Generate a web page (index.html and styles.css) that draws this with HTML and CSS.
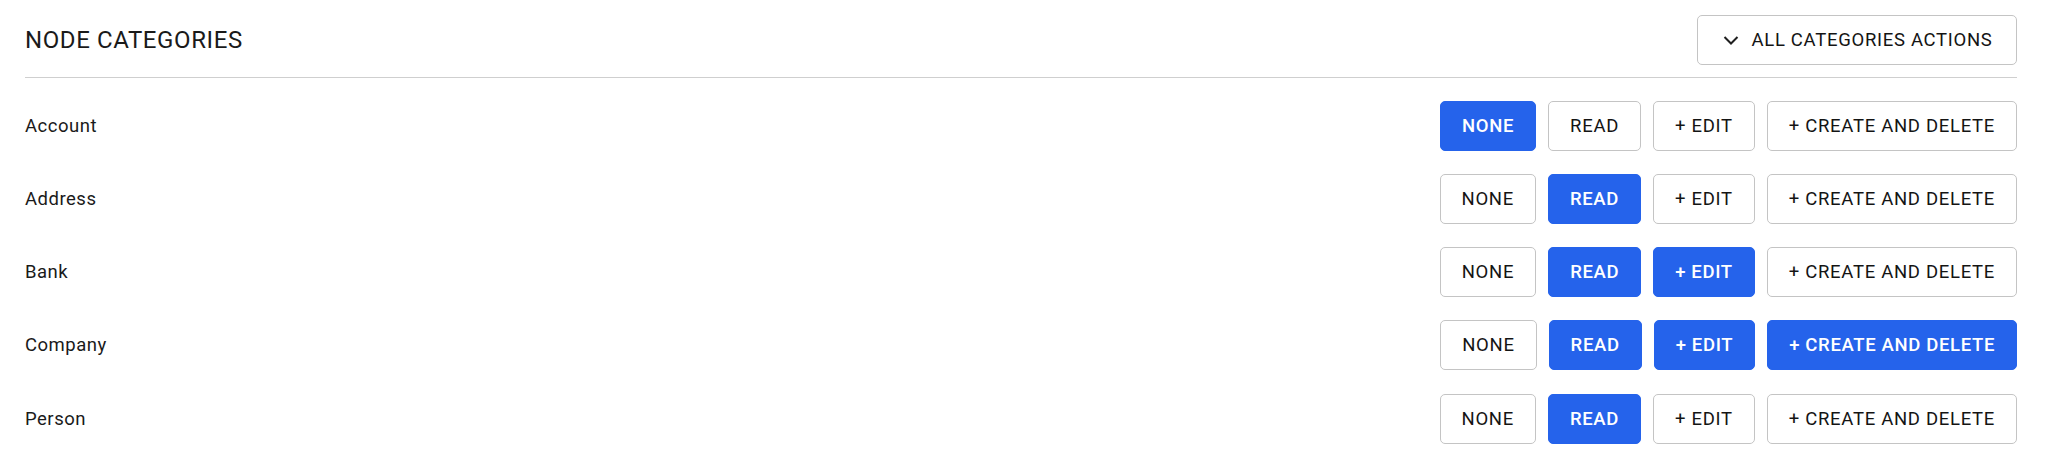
FILE: index.html
```html
<!DOCTYPE html>
<html lang="en">
<head>
<meta charset="utf-8">
<title>Node categories</title>
<link rel="stylesheet" href="styles.css">
</head>
<body>
<section class="panel">
  <header class="panel-header">
    <h2 class="panel-title">NODE CATEGORIES</h2>
    <button class="btn btn-actions" type="button">
      <svg class="chev" width="20" height="20" viewBox="0 0 20 20" aria-hidden="true"><polyline points="3.5,7 10,13.5 16.5,7" fill="none" stroke="#1f1f1f" stroke-width="2"/></svg>
      <span>ALL CATEGORIES ACTIONS</span>
    </button>
  </header>
  <ul class="rows">
    <li class="row">
      <span class="label">Account</span>
      <div class="actions">
        <button class="btn on" type="button">NONE</button>
        <button class="btn" type="button">READ</button>
        <button class="btn" type="button">+ EDIT</button>
        <button class="btn" type="button">+ CREATE AND DELETE</button>
      </div>
    </li>
    <li class="row">
      <span class="label">Address</span>
      <div class="actions">
        <button class="btn" type="button">NONE</button>
        <button class="btn on" type="button">READ</button>
        <button class="btn" type="button">+ EDIT</button>
        <button class="btn" type="button">+ CREATE AND DELETE</button>
      </div>
    </li>
    <li class="row">
      <span class="label">Bank</span>
      <div class="actions">
        <button class="btn" type="button">NONE</button>
        <button class="btn on" type="button">READ</button>
        <button class="btn on" type="button">+ EDIT</button>
        <button class="btn" type="button">+ CREATE AND DELETE</button>
      </div>
    </li>
    <li class="row">
      <span class="label">Company</span>
      <div class="actions">
        <button class="btn" type="button">NONE</button>
        <button class="btn on" type="button">READ</button>
        <button class="btn on" type="button">+ EDIT</button>
        <button class="btn on" type="button">+ CREATE AND DELETE</button>
      </div>
    </li>
    <li class="row">
      <span class="label">Person</span>
      <div class="actions">
        <button class="btn" type="button">NONE</button>
        <button class="btn on" type="button">READ</button>
        <button class="btn" type="button">+ EDIT</button>
        <button class="btn" type="button">+ CREATE AND DELETE</button>
      </div>
    </li>
  </ul>
</section>
</body>
</html>
```
FILE: styles.css
```css
* { box-sizing: border-box; }
html, body {
  margin: 0;
  background: #ffffff;
  font-family: Roboto, "Liberation Sans", Arial, sans-serif;
  color: #1a1a1a;
}
.panel {
  padding: 15px 31px 0 25px;
}
.panel-header {
  display: flex;
  align-items: center;
  justify-content: space-between;
  padding-bottom: 12px;
  border-bottom: 1px solid #cfcfcf;
}
.panel-title {
  margin: 0;
  font-size: 24px;
  font-weight: 400;
  color: #1a1a1a;
  letter-spacing: 0.6px;
}
.btn {
  display: inline-flex;
  align-items: center;
  justify-content: center;
  height: 50px;
  padding: 0 21px;
  border: 1px solid #c4c4c4;
  border-radius: 5px;
  background: #ffffff;
  color: #141414;
  font-family: Roboto, "Liberation Sans", Arial, sans-serif;
  font-size: 18.5px;
  font-weight: 400;
  letter-spacing: 0.7px;
  cursor: pointer;
}
.btn.on {
  background: #2563eb;
  border-color: #2563eb;
  color: #ffffff;
  font-weight: 500;
  letter-spacing: 0.65px;
}
.btn-actions {
  width: 320px;
  gap: 10px;
  padding: 0 22px;
}
.chev { display: block; }
.rows {
  list-style: none;
  margin: 0;
  padding: 23px 0 0 0;
  display: flex;
  flex-direction: column;
  gap: 23.15px;
}
.row {
  display: flex;
  align-items: center;
  justify-content: space-between;
}
.label {
  font-size: 18.5px;
  font-weight: 400;
  letter-spacing: 0.5px;
  color: #1a1a1a;
}
.actions {
  display: flex;
  gap: 12px;
}
```
